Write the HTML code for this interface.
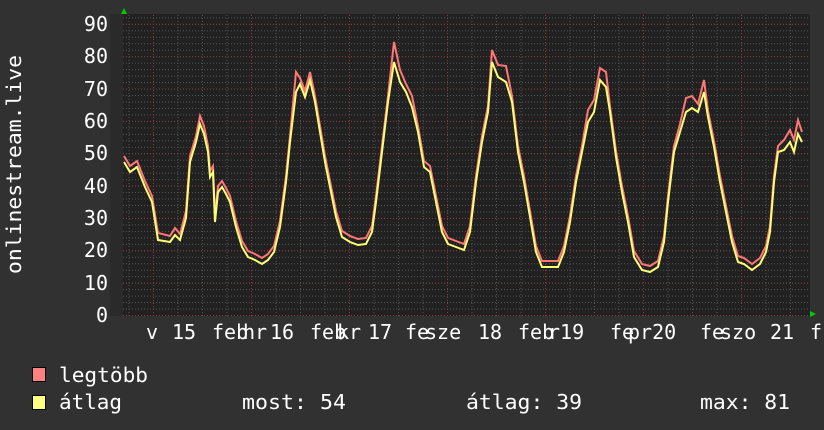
<!DOCTYPE html>
<html><head><meta charset="utf-8"><style>
html,body{margin:0;padding:0;background:#313131;}
svg{display:block}
text{font-family:"DejaVu Sans Mono","Liberation Mono",monospace;fill:#fff}
</style></head><body>
<svg width="824" height="430" xmlns="http://www.w3.org/2000/svg">
<defs>
<pattern id="vm" x="153" y="0" width="24.5" height="430" patternUnits="userSpaceOnUse">
<line x1="0.5" y1="0" x2="0.5" y2="430" stroke="#555" stroke-dasharray="1,2"/>
</pattern>
<pattern id="hm" x="0" y="315" width="824" height="6.47" patternUnits="userSpaceOnUse">
<line x1="0" y1="0.5" x2="824" y2="0.5" stroke="#555" stroke-dasharray="1,2"/>
</pattern>
<pattern id="vM" x="153" y="0" width="98" height="430" patternUnits="userSpaceOnUse">
<line x1="0.5" y1="0" x2="0.5" y2="430" stroke="#8a3a3a" stroke-dasharray="1,2"/>
</pattern>
<pattern id="hM" x="0" y="315" width="824" height="32.35" patternUnits="userSpaceOnUse">
<line x1="0" y1="0.5" x2="824" y2="0.5" stroke="#8a3a3a" stroke-dasharray="1,2"/>
</pattern>
</defs>
<rect x="110" y="14" width="13" height="302" fill="#2a2a2a"/>
<rect x="123" y="14" width="687" height="302" fill="#212121"/>
<rect x="123" y="14" width="687" height="302" fill="url(#hm)"/>
<rect x="123" y="14" width="687" height="302" fill="url(#vm)"/>
<rect x="123" y="14" width="687" height="302" fill="url(#hM)"/>
<rect x="123" y="14" width="687" height="302" fill="url(#vM)"/>
<polygon points="121,14 127,14 124,8" fill="#00cc00"/>
<polygon points="810,311 810,317 816,314" fill="#00cc00"/>
<polyline fill="none" stroke="#ff7777" stroke-width="2" points="124,156 130,166 137,161 145,181 152,196 158,233 170,236 175,228 180,234 186,211 190,156 196,136 200,116 204,126 208,146 210,171 213,166 215,216 218,186 222,181 226,188 230,196 236,221 242,241 248,251 255,254 262,258 268,254 274,246 280,221 286,176 290,136 296,72 300,78 305,91 310,72 315,96 320,126 325,156 330,181 336,211 342,231 350,236 358,239 366,238 372,226 376,196 382,146 388,96 394,42 400,70 406,84 412,96 418,126 424,161 430,166 436,196 442,226 448,238 456,241 464,244 470,226 476,176 482,136 488,106 492,50 498,65 506,66 512,96 518,146 524,176 530,211 536,246 542,261 550,261 558,261 564,246 570,216 576,176 582,146 588,110 594,100 600,68 606,72 610,106 616,151 622,186 628,216 634,251 642,264 650,266 658,261 664,236 668,196 674,146 680,124 686,98 692,96 698,104 704,80 708,111 714,141 720,176 726,206 732,236 738,256 744,258 752,264 760,258 766,246 770,226 774,176 778,146 784,140 790,130 794,140 798,120 802,132"/>
<polyline fill="none" stroke="#ffff77" stroke-width="2" points="124,162 130,172 137,167 145,187 152,202 158,240 170,242 175,235 180,240 186,218 190,162 196,142 200,124 204,134 208,152 210,177 213,172 215,222 218,192 222,187 226,194 230,202 236,227 242,247 248,257 255,260 262,264 268,260 274,252 280,227 286,182 290,142 296,92 300,84 305,97 310,80 315,102 320,132 325,162 330,187 336,217 342,237 350,242 358,245 366,244 372,232 376,202 382,152 388,102 394,62 400,82 406,92 412,107 418,132 424,167 430,172 436,202 442,232 448,244 456,247 464,250 470,232 476,182 482,142 488,112 492,62 498,77 506,82 512,102 518,152 524,182 530,217 536,252 542,267 550,267 558,267 564,252 570,222 576,182 582,152 588,122 594,112 600,80 606,87 610,112 616,157 622,192 628,222 634,257 642,270 650,272 658,267 664,242 668,202 674,152 680,132 686,112 692,108 698,112 704,92 708,117 714,147 720,182 726,212 732,242 738,262 744,264 752,270 760,264 766,252 770,232 774,182 778,152 784,150 790,142 794,152 798,134 802,142"/>
<g font-size="20" text-anchor="end">
<text x="108" y="31">90</text><text x="108" y="63">80</text><text x="108" y="96">70</text>
<text x="108" y="128">60</text><text x="108" y="160">50</text><text x="108" y="193">40</text>
<text x="108" y="225">30</text><text x="108" y="257">20</text><text x="108" y="290">10</text>
<text x="108" y="322">0</text>
</g>
<text transform="translate(21,274) rotate(-90)" font-size="20" textLength="219" lengthAdjust="spacingAndGlyphs">onlinestream.live</text>
<g font-size="20">
<text x="146" y="339">v</text>
<text x="172" y="339">15</text>
<text x="212" y="339">feb</text><text x="243" y="339">hr</text>
<text x="270" y="339">16</text>
<text x="310" y="339">feb</text><text x="337" y="339">kr</text>
<text x="368" y="339">17</text>
<text x="405" y="339">fe</text><text x="425" y="339">sze</text>
<text x="478" y="339">18</text>
<text x="518" y="339">feb</text><text x="548" y="339">r19</text>
<text x="610" y="339">fe</text><text x="628" y="339">pr20</text>
<text x="700" y="339">fe</text><text x="720" y="339">szo</text>
<text x="770" y="339">21</text>
<text x="810" y="339">f</text>
</g>
<rect x="32.5" y="367.5" width="13" height="14" fill="#ff8080" stroke="#000"/>
<rect x="32.5" y="395.5" width="13" height="14" fill="#ffff80" stroke="#000"/>
<g font-size="20">
<text x="59" y="382" textLength="89" lengthAdjust="spacingAndGlyphs">legtöbb</text>
<text x="59" y="409" textLength="63" lengthAdjust="spacingAndGlyphs">átlag</text>
<text x="242" y="409" textLength="104" lengthAdjust="spacingAndGlyphs">most: 54</text>
<text x="466" y="409" textLength="116" lengthAdjust="spacingAndGlyphs">átlag: 39</text>
<text x="700" y="409" textLength="90" lengthAdjust="spacingAndGlyphs">max: 81</text>
</g>
</svg>
</body></html>
